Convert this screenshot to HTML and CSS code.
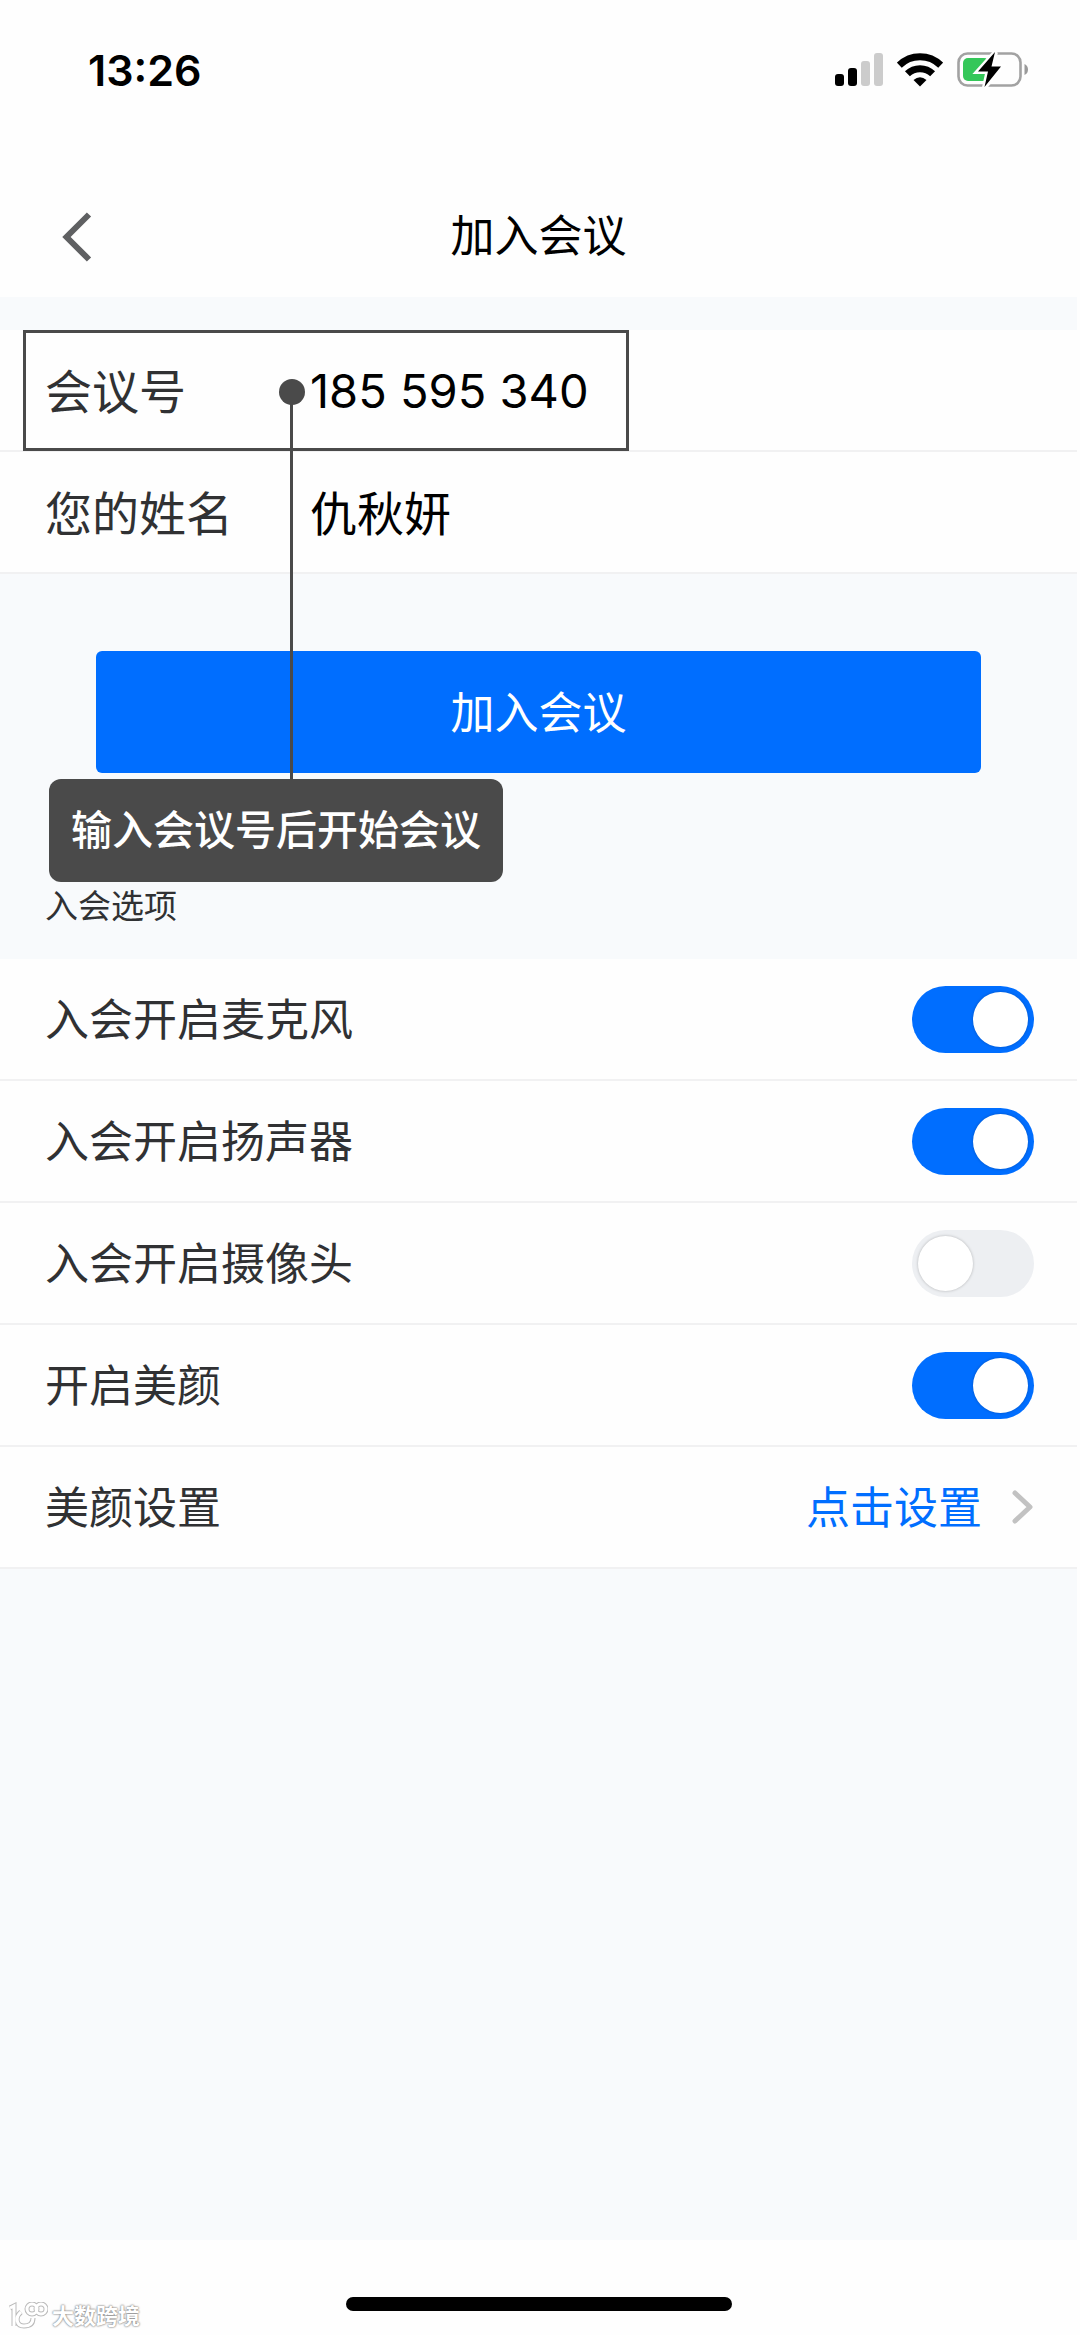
FILE: index.html
```html
<!DOCTYPE html>
<html lang="zh-CN">
<head>
<meta charset="utf-8">
<meta name="viewport" content="width=device-width, initial-scale=1">
<title>加入会议</title>
<link rel="stylesheet" href="styles.css">
</head>
<body>
<div class="status">
  <time class="clock">13:26</time>
  <div class="status-icons">
    <svg width="48" height="34" viewBox="0 0 48 34" aria-hidden="true">
      <rect x="0" y="21" width="9" height="12" rx="3"/>
      <rect x="13" y="15" width="9" height="18" rx="3"/>
      <rect x="26" y="8" width="9" height="25" rx="3" fill="#ccc"/>
      <rect x="39" y="0" width="9" height="33" rx="3" fill="#ccc"/>
    </svg>
    <svg width="46" height="34" viewBox="0 0 46 34" aria-hidden="true">
      <g fill="none" stroke="#000" stroke-width="7">
        <path d="M2.300 12.200A29.500 29.500 0 0 1 43.700 12.200"/>
        <path d="M10.400 20.800A18 18 0 0 1 35.600 20.800"/>
      </g>
      <path d="M16.500 27Q23 21.500 29.500 27L23 33.500Z"/>
    </svg>
    <svg width="72" height="38" viewBox="0 0 72 38" aria-hidden="true">
      <rect x="1.500" y="2.500" width="62" height="32" rx="9" fill="none" stroke="#a2a2a2" stroke-width="2.600"/>
      <path d="M67.500 13Q71 14.500 71 18.500T67.500 24Z" fill="#9a9a9a"/>
      <rect x="6" y="7" width="26" height="23" rx="5" fill="#34c759"/>
      <path d="M38.500 1L21 20.500H31L27.500 36.500L44.500 15.500H34.500Z" stroke="#fff" stroke-width="5"/>
      <path d="M38 1L21 20.500H31L27.500 36L44 15.500H34.500Z"/>
    </svg>
  </div>
</div>

<header class="nav">
  <button class="back" type="button" aria-label="返回">
    <svg width="30" height="50" viewBox="0 0 30 50" aria-hidden="true"><path d="M27 2.500L4.500 25L27 47.500" fill="none" stroke="#5f6062" stroke-width="6"/></svg>
  </button>
  <h1 class="title">加入会议</h1>
</header>

<main class="content">
  <form class="join">
    <div class="fields">
      <div class="row">
        <label class="field-label" for="meeting">会议号</label>
        <input class="field number" id="meeting" type="text" inputmode="numeric" value="185 595 340">
      </div>
      <div class="row">
        <label class="field-label" for="name">您的姓名</label>
        <input class="field" id="name" type="text" value="仇秋妍">
      </div>
      <div class="highlight"></div>
      <div class="dot"></div>
      <div class="leader"></div>
      <div class="tip" role="note">输入会议号后开始会议</div>
    </div>
    <button class="submit" type="submit">加入会议</button>
  </form>

  <h2 class="section">入会选项</h2>
  <div class="options">
    <div class="row"><label class="option" for="mic">入会开启麦克风</label><input class="switch" id="mic" type="checkbox" role="switch" checked></div>
    <div class="row"><label class="option" for="speaker">入会开启扬声器</label><input class="switch" id="speaker" type="checkbox" role="switch" checked></div>
    <div class="row"><label class="option" for="camera">入会开启摄像头</label><input class="switch" id="camera" type="checkbox" role="switch"></div>
    <div class="row"><label class="option" for="beauty">开启美颜</label><input class="switch" id="beauty" type="checkbox" role="switch" checked></div>
    <div class="row">
      <span class="option">美颜设置</span>
      <a class="more" href="#beauty"><span class="option">点击设置</span>
        <svg width="22" height="36" viewBox="0 0 22 36" aria-hidden="true"><path d="M3 4L18 18L3 32" fill="none" stroke="#c2c2c2" stroke-width="5" stroke-linecap="round" stroke-linejoin="round"/></svg>
      </a>
    </div>
  </div>
</main>

<footer class="footer">
  <div class="brand">
    <svg width="40" height="28" viewBox="0 0 40 28" aria-hidden="true">
      <g class="brand-shadow"><path d="M2 6L6 4V24M13 10C7 15 8 24 16 24C22 24 25 21 25 16"/><circle cx="24" cy="7" r="5"/><circle cx="33" cy="7" r="5"/></g>
      <g class="brand-line"><path d="M2 6L6 4V24M13 10C7 15 8 24 16 24C22 24 25 21 25 16"/><circle cx="24" cy="7" r="5"/><circle cx="33" cy="7" r="5"/></g>
    </svg>
    <span>大数跨境</span>
  </div>
  <div class="home"></div>
</footer>
</body>
</html>
```

FILE: styles.css
```css
* { box-sizing: border-box; }

body {
  margin: 0;
  min-height: 100vh;
  padding-right: 3px;
  display: flex;
  flex-direction: column;
  background: #fefefe;
  color: #303133;
  font-family: Inter, "Noto Sans CJK SC", sans-serif;
  font-size: 44px;
}

button, input { font: inherit; color: inherit; }

.status {
  height: 140px;
  padding: 0 48px 0 88px;
  display: flex;
  align-items: center;
  justify-content: space-between;
  color: #000;
}
.clock { font-size: 43px; font-weight: 600; }
.status-icons { display: flex; align-items: center; gap: 14px; }

.nav {
  height: 157px;
  padding: 36px 62px 0;
  display: grid;
  grid-template-columns: 1fr auto 1fr;
  align-items: center;
}
.back { justify-self: start; display: flex; padding: 0; border: 0; background: none; }
.title {
  margin: 0;
  padding-bottom: 2px;
  font-size: 44px;
  font-weight: 400;
  line-height: 64px;
  color: #000;
}

.content { flex: 1; padding-top: 33px; background: #f8fafc; }

.fields { position: relative; }
.row {
  height: 122px;
  padding: 0 43px 0 45px;
  display: flex;
  align-items: center;
  justify-content: space-between;
  background: #fefefe;
  border-bottom: 2px solid #f1f1f2;
}
.option { padding-bottom: 4px; }
.field-label { width: 265px; padding-bottom: 4px; font-size: 47px; }
.field {
  flex: 1;
  min-width: 0;
  height: 76px;
  padding: 0 0 4px;
  border: 0;
  background: none;
  font-size: 47px;
  color: #000;
}
.number { padding: 0; }

.highlight {
  position: absolute;
  top: 0;
  left: 23px;
  width: 606px;
  height: 121px;
  border: 3px solid #4a4a4a;
  pointer-events: none;
}
.dot {
  position: absolute;
  top: 49px;
  left: 279px;
  width: 26px;
  height: 26px;
  border-radius: 50%;
  background: #4a4a4a;
}
.leader {
  position: absolute;
  top: 62px;
  left: 290px;
  width: 3px;
  height: 388px;
  background: #4a4a4a;
}
.tip {
  position: absolute;
  top: 449px;
  left: 49px;
  padding: 0 22px;
  border-radius: 12px;
  background: #4a4a4a;
  color: #fff;
  font-size: 41px;
  font-weight: 500;
  line-height: 103px;
  white-space: nowrap;
}

.submit {
  display: block;
  width: calc(100% - 192px);
  height: 122px;
  margin: 77px auto 0;
  padding: 0 0 4px;
  border: 0;
  border-radius: 6px;
  background: #006eff;
  color: #fff;
}

.section {
  margin: 0;
  padding: 108px 45px 28px;
  font-size: 33px;
  font-weight: 400;
  line-height: 50px;
}

.switch {
  appearance: none;
  width: 122px;
  height: 67px;
  margin: 0;
  padding: 6px;
  display: flex;
  border-radius: 34px;
  background: #edeff2;
}
.switch::before {
  content: "";
  width: 55px;
  height: 55px;
  border-radius: 50%;
  background: #fff;
  box-shadow: 0 0 3px rgba(0, 0, 0, 0.25);
}
.switch:checked { justify-content: flex-end; background: #006eff; }

.more {
  display: flex;
  align-items: center;
  gap: 30px;
  color: #006eff;
  text-decoration: none;
}

.footer {
  position: relative;
  height: 95px;
  padding-top: 57px;
}
.home {
  width: 386px;
  height: 14px;
  margin: 0 auto;
  border-radius: 7px;
  background: #000;
}
.brand {
  position: absolute;
  left: 8px;
  bottom: 4px;
  display: flex;
  align-items: center;
  gap: 4px;
  color: #fff;
  font-size: 22px;
  font-weight: 700;
  line-height: 30px;
  text-shadow: 0 0 2px #777, 0 0 2px #999;
}
.brand-shadow, .brand-line { fill: none; stroke: #bbb; stroke-width: 5; }
.brand-line { stroke: #fff; stroke-width: 3; }
```
